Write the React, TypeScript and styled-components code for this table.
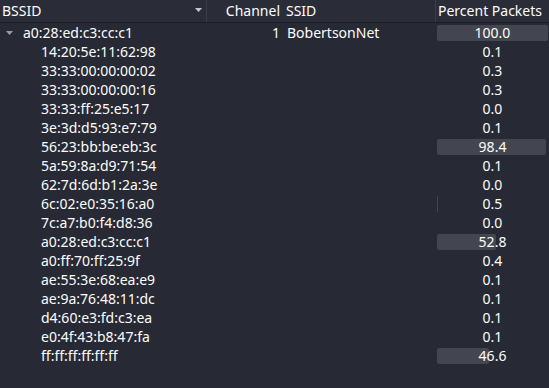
import React from "react";
import styled, { createGlobalStyle } from "styled-components";

const Global = createGlobalStyle`
  html, body { margin: 0; padding: 0; background: #272a34; }
  body { font-family: "Noto Sans", "Open Sans", sans-serif; font-size: 14px; color: #fcfcfc; }
`;

const COLS = "207px 76px 153px 113px";

const Table = styled.div`
  width: 549px;
  height: 388px;
  background: #272a34;
  overflow: hidden;
`;

const Header = styled.div`
  display: grid;
  grid-template-columns: ${COLS};
  height: 22px;
  background: #2a2d37;
  border-bottom: 1px solid #1c1e25;
`;

const HeadCell = styled.div<{ $align?: string; $divider?: boolean }>`
  position: relative;
  display: flex;
  align-items: center;
  justify-content: ${(p) => p.$align || "flex-start"};
  padding: 0 ${(p) => (p.$align === "flex-end" ? "3px" : "2px")};
  border-right: ${(p) => (p.$divider ? "1px solid #3b3e48" : "none")};
  white-space: nowrap;
  line-height: 22px;
`;

const SortArrow = styled.svg`
  position: absolute;
  right: 4px;
  top: 8px;
`;

const Row = styled.div`
  display: grid;
  grid-template-columns: ${COLS};
  height: 19px;
  line-height: 19px;
`;

const Cell = styled.div<{ $align?: string; $indent?: number }>`
  position: relative;
  display: flex;
  align-items: center;
  justify-content: ${(p) => p.$align || "flex-start"};
  padding-left: ${(p) => p.$indent ?? 0}px;
  padding-right: ${(p) => (p.$align === "flex-end" ? 3 : 0)}px;
  white-space: nowrap;
`;

const Expander = styled.svg`
  width: 7px;
  height: 4px;
  margin: 0 10px 0 6px;
`;

const PctCell = styled.div`
  position: relative;
  display: flex;
  align-items: center;
  justify-content: center;
`;

const Bar = styled.div`
  position: absolute;
  left: 1px;
  top: 2px;
  height: 16px;
  background: #44464f;
  border-radius: 2px;
`;

const PctText = styled.span`
  position: relative;
`;

type R = { bssid: string; pct: string; parent?: boolean; ch?: string; ssid?: string };

const rows: R[] = [
  { bssid: "a0:28:ed:c3:cc:c1", pct: "100.0", parent: true, ch: "1", ssid: "BobertsonNet" },
  { bssid: "14:20:5e:11:62:98", pct: "0.1" },
  { bssid: "33:33:00:00:00:02", pct: "0.3" },
  { bssid: "33:33:00:00:00:16", pct: "0.3" },
  { bssid: "33:33:ff:25:e5:17", pct: "0.0" },
  { bssid: "3e:3d:d5:93:e7:79", pct: "0.1" },
  { bssid: "56:23:bb:be:eb:3c", pct: "98.4" },
  { bssid: "5a:59:8a:d9:71:54", pct: "0.1" },
  { bssid: "62:7d:6d:b1:2a:3e", pct: "0.0" },
  { bssid: "6c:02:e0:35:16:a0", pct: "0.5" },
  { bssid: "7c:a7:b0:f4:d8:36", pct: "0.0" },
  { bssid: "a0:28:ed:c3:cc:c1", pct: "52.8" },
  { bssid: "a0:ff:70:ff:25:9f", pct: "0.4" },
  { bssid: "ae:55:3e:68:ea:e9", pct: "0.1" },
  { bssid: "ae:9a:76:48:11:dc", pct: "0.1" },
  { bssid: "d4:60:e3:fd:c3:ea", pct: "0.1" },
  { bssid: "e0:4f:43:b8:47:fa", pct: "0.1" },
  { bssid: "ff:ff:ff:ff:ff:ff", pct: "46.6" },
];

export default function App() {
  return (
    <Table>
      <Global />
      <Header>
        <HeadCell $divider>
          BSSID
          <SortArrow width="7" height="4" viewBox="0 0 7 4">
            <path d="M0 0 L7 0 L3.5 4 Z" fill="#c4c6cb" />
          </SortArrow>
        </HeadCell>
        <HeadCell $align="flex-end">Channel</HeadCell>
        <HeadCell $divider style={{ paddingLeft: 3 }}>SSID</HeadCell>
        <HeadCell>Percent Packets</HeadCell>
      </Header>
      {rows.map((r, i) => {
        const w = Math.round((parseFloat(r.pct) / 100) * 111);
        return (
          <Row key={i}>
            <Cell $indent={r.parent ? 0 : 41}>
              {r.parent && (
                <Expander viewBox="0 0 7 4">
                  <path d="M0 0 L7 0 L3.5 4 Z" fill="#9a9ca3" />
                </Expander>
              )}
              {r.bssid}
            </Cell>
            <Cell $align="flex-end">{r.ch ?? ""}</Cell>
            <Cell $indent={4}>{r.ssid ?? ""}</Cell>
            <PctCell>
              {w > 0 && <Bar style={{ width: `${w}px` }} />}
              <PctText>{r.pct}</PctText>
            </PctCell>
          </Row>
        );
      })}
    </Table>
  );
}
